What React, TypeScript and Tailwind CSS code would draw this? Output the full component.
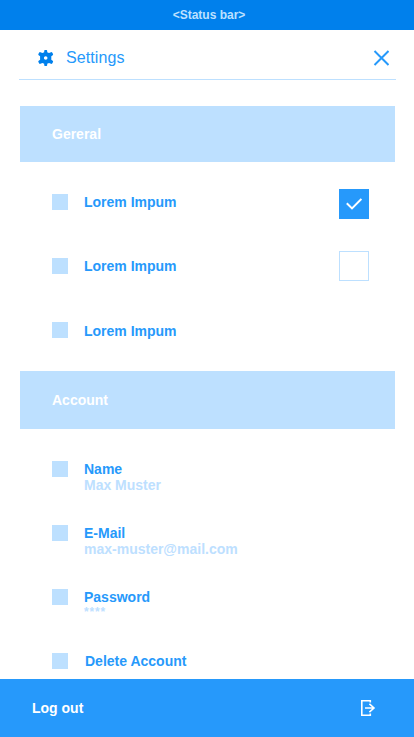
import type { ReactNode } from "react";

function SectionHeader({ title, className }: { title: string; className: string }) {
  return (
    <h2 className={`mr-[19px] ml-5 flex shrink-0 items-center bg-[#bde0ff] pl-8 text-sm font-bold text-white ${className}`}>
      {title}
    </h2>
  );
}

function Row({
  label,
  value,
  labelClass = "",
  valueClass = "",
  children,
}: {
  label: string;
  value?: string;
  labelClass?: string;
  valueClass?: string;
  children?: ReactNode;
}) {
  return (
    <div className="flex h-16 shrink-0 items-start pr-[45px] pl-[52px]">
      <span className="size-4 shrink-0 bg-[#bde0ff]" />
      <div className={`ml-4 flex-1 text-sm leading-4 font-bold ${labelClass}`}>
        <div>{label}</div>
        {value && <div className={`text-[#bde0ff] ${valueClass}`}>{value}</div>}
      </div>
      {children}
    </div>
  );
}

export default function App() {
  return (
    <div className="flex h-[737px] w-[414px] flex-col overflow-hidden bg-white font-['Liberation_Sans',Arial,sans-serif] text-[#2699fb]">
      <div className="flex h-[30px] shrink-0 items-center justify-center bg-[#0080ec] pl-1 text-xs font-bold text-[#bde0ff]">
        &lt;Status bar&gt;
      </div>

      <header className="mr-[18px] ml-[19px] flex h-[50px] shrink-0 items-center border-b border-[#bde0ff] pt-[7px] pr-[7px] pl-[19px]">
        <svg width="16" height="16" viewBox="0 0 16 16" fill="#0080ec" className="-mt-px">
          <path
            fillRule="evenodd"
            d="M6.2 0.9Q6.2 0 7 0H8.4Q9.2 0 9.2 0.9V2.2L11 3L13 2.2Q13.8 1.9 14.2 2.6L15 4.1Q15.4 4.9 14.7 5.3L13.3 6.3V9.7L14.7 10.7Q15.4 11.1 15 11.9L14.2 13.4Q13.8 14.1 13 13.8L11 13L9.2 13.8V15.1Q9.2 16 8.4 16H7Q6.2 16 6.2 15.1V13.8L4.4 13L2.4 13.8Q1.6 14.1 1.2 13.4L0.4 11.9Q0 11.1 0.7 10.7L2.1 9.7V6.3L0.7 5.3Q0 4.9 0.4 4.1L1.2 2.6Q1.6 1.9 2.4 2.2L4.4 3L6.2 2.2ZM7.7 6.2A1.8 1.8 0 1 0 7.7 9.8A1.8 1.8 0 1 0 7.7 6.2Z"
          />
        </svg>
        <h1 className="ml-3 flex-1 text-base leading-5 tracking-[0.1px]">Settings</h1>
        <svg width="16" height="16" viewBox="0 0 16 16" fill="none" stroke="#2699fb" strokeWidth="2" className="-mt-px">
          <path d="M1.5 1L15.5 15M15.5 1L1.5 15" />
        </svg>
      </header>

      <main className="flex min-h-0 flex-1 flex-col overflow-hidden pt-[26px]">
        <SectionHeader title="Gereral" className="h-14" />
        <div className="h-[209px] shrink-0 pt-8">
          <Row label="Lorem Impum">
            <span className="-mt-[5px] flex size-[30px] items-center justify-center bg-[#2699fb]">
              <svg width="16" height="12" viewBox="0 0 16 12" fill="none" stroke="white" strokeWidth="2" className="-mt-px">
                <path d="M0.8 5.2L6 10.4L15.4 1" />
              </svg>
            </span>
          </Row>
          <Row label="Lorem Impum">
            <span className="-mt-[7px] size-[30px] border border-[#bde0ff]" />
          </Row>
          <Row label="Lorem Impum" labelClass="pt-px" />
        </div>
        <SectionHeader title="Account" className="h-[58px]" />
        <div className="shrink-0 pt-8">
          <Row label="Name" value="Max Muster" />
          <Row label="E-Mail" value="max-muster@mail.com" />
          <Row label="Password" value="****" valueClass="-mt-px text-xs leading-4 tracking-[0.8px]" />
          <Row label="Delete Account" labelClass="pl-px" />
        </div>
      </main>

      <footer className="flex h-[58px] shrink-0 items-center justify-between bg-[#2699fb] pr-[38px] pl-8 text-sm font-bold text-white">
        <span>Log out</span>
        <svg width="16" height="16" viewBox="0 0 16 16" fill="none" stroke="white" strokeWidth="1.6">
          <path d="M10.3 2.4V0.8H1.8V15.2H10.3V13.6M5 8H14.2M9.4 3.8L14 8L9.4 12.2" />
        </svg>
      </footer>
    </div>
  );
}
